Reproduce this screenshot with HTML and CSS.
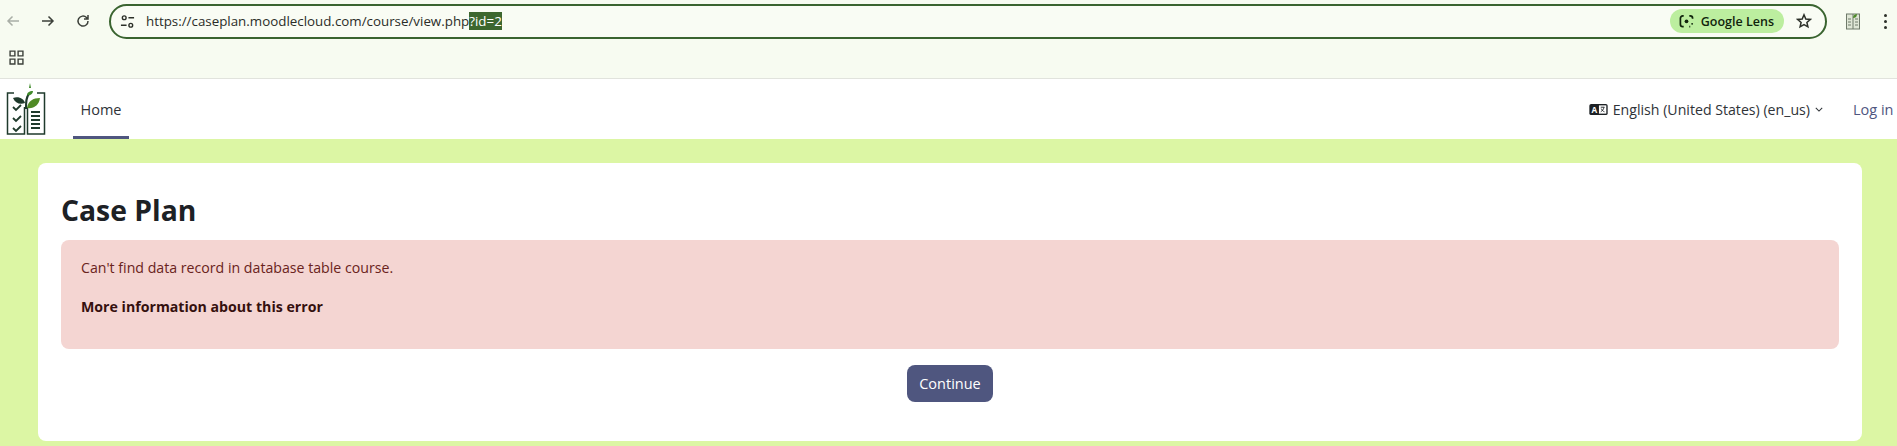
FILE: index.html
```html
<!DOCTYPE html>
<html lang="en">
<head>
    <meta charset="UTF-8">
    <meta name="viewport" content="width=device-width, initial-scale=1.0">
    <title>Case Plan</title>
    <link rel="stylesheet" href="styles.css">
</head>
<body>
    <!-- browser toolbar -->
    <div class="chrome">
        <div class="toolbar">
            <div class="nav-buttons">
                <svg class="icon" viewBox="0 0 16 16"><path d="M14 8H3M7.500 3.500 3 8l4.500 4.500" stroke="#a9aea6"/></svg>
                <svg class="icon" viewBox="0 0 16 16"><path d="M2 8h11M8.500 3.500 13 8l-4.500 4.500" stroke="#3c403a"/></svg>
                <svg class="icon" viewBox="0 0 16 16"><path d="M13 8a5 5 0 1 1-1.500-3.500L13 6M13 2v4H9" stroke="#3c403a"/></svg>
            </div>
            <div class="omnibox">
                <svg class="tune" viewBox="0 0 16 16"><circle cx="4.500" cy="4" r="2"/><path d="M9 4h6M1 12h6"/><circle cx="11.500" cy="12" r="2"/></svg>
                <div class="url">https://caseplan.moodlecloud.com/course/view.php<span class="url-selected">?id=2</span></div>
                <div class="lens">
                    <svg class="lens-icon" viewBox="0 0 16 16"><path d="M5 2H4a2.500 2.500 0 0 0-2.500 2.500V11A2.500 2.500 0 0 0 4 13.500h1M11 2h1a2.500 2.500 0 0 1 2.500 2.500V5M11 13.500h1"/><circle cx="8" cy="7.800" r="2" fill="#10240c" stroke="none"/><circle cx="14" cy="10.500" r="1" fill="#10240c" stroke="none"/></svg>
                    <span>Google Lens</span>
                </div>
                <svg class="star" viewBox="0 0 16 16"><path d="M8 1.800 9.800 6l4.500.4-3.400 3 1 4.400L8 11.500l-3.900 2.300 1-4.400-3.400-3L6.200 6z"/></svg>
            </div>
            <svg class="ext" viewBox="0 0 16 20">
                <rect x="1.500" y="3" width="13" height="15" fill="#dfe6d6" stroke="#6f7a6a"/>
                <path d="M8 3v15M3 8h3M3 11h3M3 14h3M10 8h3M10 11h3M10 14h3" stroke="#6f7a6a"/>
                <path d="M8 7c0-3 2-4 4-4 0 3-2 4-4 4z" fill="#4e8a2a"/>
            </svg>
            <div class="dots"><i></i><i></i><i></i></div>
        </div>
        <div class="bookmarks">
            <svg class="apps" viewBox="0 0 14 14"><path d="M1 1h4.500v4.500H1zM8.500 1H13v4.500H8.500zM1 8.500h4.500V13H1zM8.500 8.500H13V13H8.500z"/></svg>
        </div>
    </div>

    <!-- moodle navbar -->
    <nav class="navbar">
        <svg class="logo" viewBox="0 0 40 52">
            <path d="M8 10H1.500v41H18.500V24M31 10h7.500v41H21.500V24" fill="none" stroke="#1f3a2c" stroke-width="1.500"/>
            <path d="M20 26c0-7 0-12 3-15" fill="none" stroke="#1f3a2c" stroke-width="2"/>
            <path d="M19 20c-1-4-6-7-12-5 2 5 7 7 12 5z" fill="#1f3a2c"/>
            <path d="M21 25c1-7 6-10 13-10-1 7-6 11-13 10z" fill="#4f8a24"/>
            <path d="M21 12c0-2 2-4 6-4 0 3-3 5-6 4zM23 5l1-5 1 5z" fill="#3f8a2a"/>
            <path d="M7 24l3 3 5-5M7 35l3 3 5-5M7 45l3 3 5-5" fill="none" stroke="#1f3a2c" stroke-width="1.800"/>
            <path d="M25 29h9M25 33h9M25 37h9M25 41h9M25 45h9" fill="none" stroke="#1f3a2c" stroke-width="1.800"/>
        </svg>
        <a class="nav-link">Home</a>
        <div class="nav-right">
            <div class="lang">
                <svg class="lang-icon" viewBox="0 0 20 12"><rect width="20" height="12" rx="2" fill="#1d2125"/><rect x="10.500" y="1.500" width="8" height="9" fill="#fff"/><path d="M12.500 3.500h4M16 3.500c-.5 2.500-2 4-3.500 5M13 5c.7 1.700 2 3 3.500 3.500" stroke="#1d2125" fill="none"/><text x="2.500" y="9.300" class="lang-a">A</text></svg>
                <span>English (United States) ‎(en_us)‎</span>
                <svg class="caret" viewBox="0 0 10 6"><path d="M1 1l4 4 4-4"/></svg>
            </div>
            <a class="login">Log in</a>
        </div>
    </nav>

    <div class="page">
        <div class="card">
            <h1>Case Plan</h1>
            <div class="alert">
                <p>Can't find data record in database table course.</p>
                <p class="more">More information about this error</p>
            </div>
            <div class="actions">
                <button type="button">Continue</button>
            </div>
        </div>
    </div>
</body>
</html>
```

FILE: styles.css
```css
html, body {
    margin: 0;
    padding: 0;
    height: 446px;
    overflow: hidden;
}

body {
    font-family: "Open Sans", "Noto Sans", Arial, sans-serif;
    background: #dcf6a4;
    color: #1d2125;
}

.chrome {
    background: #f7fbf1;
    height: 78px;
    border-bottom: 1px solid #e1e3dd;
}

.toolbar {
    display: flex;
    align-items: center;
    height: 42px;
}

.nav-buttons {
    display: flex;
    align-items: center;
    gap: 19px;
    width: 109px;
    padding-left: 5px;
    box-sizing: border-box;
}

.icon {
    width: 16px;
    height: 16px;
    fill: none;
    stroke-width: 1.500;
}

.omnibox {
    display: flex;
    align-items: center;
    width: 1718px;
    height: 35px;
    box-sizing: border-box;
    border: 2px solid #3a6430;
    border-radius: 18px;
    background: #f9fcf4;
    padding-left: 9px;
    padding-right: 13px;
}

.tune {
    width: 15px;
    height: 15px;
    fill: none;
    stroke: #2c3029;
    stroke-width: 1.500;
}

.url {
    margin-left: 11px;
    flex: 1;
    font-size: 13.350px;
    line-height: 24px;
    color: #2a2d28;
    white-space: nowrap;
}

.url-selected {
    background: #3d672f;
    color: #fff;
}

.lens {
    display: flex;
    align-items: center;
    gap: 7px;
    height: 24px;
    padding: 0 10px 0 9px;
    border-radius: 12px;
    background: #bcee9f;
    font-size: 12.500px;
    font-weight: 600;
    color: #10240c;
}

.lens-icon {
    width: 15px;
    height: 15px;
    fill: none;
    stroke: #10240c;
    stroke-width: 1.800;
}

.star {
    width: 16px;
    height: 16px;
    margin-left: 12px;
    fill: none;
    stroke: #2c3029;
    stroke-width: 1.500;
}

.ext {
    width: 16px;
    height: 20px;
    margin-left: 18px;
    fill: none;
}

.dots {
    display: flex;
    flex-direction: column;
    gap: 3px;
    margin-left: 23px;
}

.dots i {
    display: block;
    width: 3px;
    height: 3px;
    border-radius: 50%;
    background: #2c3029;
}

.bookmarks {
    display: flex;
    align-items: center;
    height: 31px;
    padding-left: 9px;
}

.apps {
    width: 15px;
    height: 15px;
    fill: none;
    stroke: #3c403a;
    stroke-width: 1.300;
}

.navbar {
    display: flex;
    align-items: stretch;
    height: 60px;
    background: #fff;
    box-sizing: border-box;
}

.logo {
    width: 40px;
    height: 52px;
    margin-left: 6px;
    margin-top: 4px;
}

.nav-link {
    display: flex;
    align-items: center;
    justify-content: center;
    margin-left: 27px;
    padding: 4px 8px 0;
    width: 40px;
    font-size: 14.500px;
    color: #2f3338;
    border-bottom: 3px solid #4f567f;
}

.nav-right {
    display: flex;
    align-items: center;
    margin-left: auto;
    padding-top: 1px;
}

.lang {
    display: flex;
    align-items: center;
    font-size: 14.150px;
    color: #2f3338;
}

.lang-icon {
    width: 19px;
    height: 11px;
    margin-right: 5px;
}

.lang-a {
    font-size: 9px;
    font-weight: 700;
    fill: #fff;
}

.caret {
    width: 8px;
    height: 5px;
    margin-left: 5px;
    fill: none;
    stroke: #2f3338;
    stroke-width: 1.300;
}

.login {
    margin-left: 30px;
    width: 44px;
    font-size: 14.500px;
    color: #4f567f;
    white-space: nowrap;
    overflow: hidden;
}

.page {
    padding: 24px 35px 0 38px;
}

.card {
    background: #fff;
    border-radius: 8px;
    height: 278px;
    padding: 0 23px;
    box-sizing: border-box;
}

h1 {
    margin: 0;
    padding-top: 27px;
    font-size: 28.300px;
    line-height: 40px;
    font-weight: 700;
    color: #1d2125;
    height: 50px;
}

.alert {
    background: #f4d5d2;
    border-radius: 8px;
    height: 109px;
    box-sizing: border-box;
    padding: 17px 20px;
    color: #6a2320;
    font-size: 14.170px;
    line-height: 22px;
}

.alert p {
    margin: 0;
}

.alert .more {
    margin-top: 17px;
    font-weight: 700;
    color: #35100e;
}

.actions {
    display: flex;
    justify-content: center;
    padding-top: 16px;
}

button {
    width: 86px;
    height: 37px;
    padding: 0;
    border: none;
    border-radius: 8px;
    background: #4f567f;
    color: #fff;
    font-family: inherit;
    font-size: 14.500px;
}
```
